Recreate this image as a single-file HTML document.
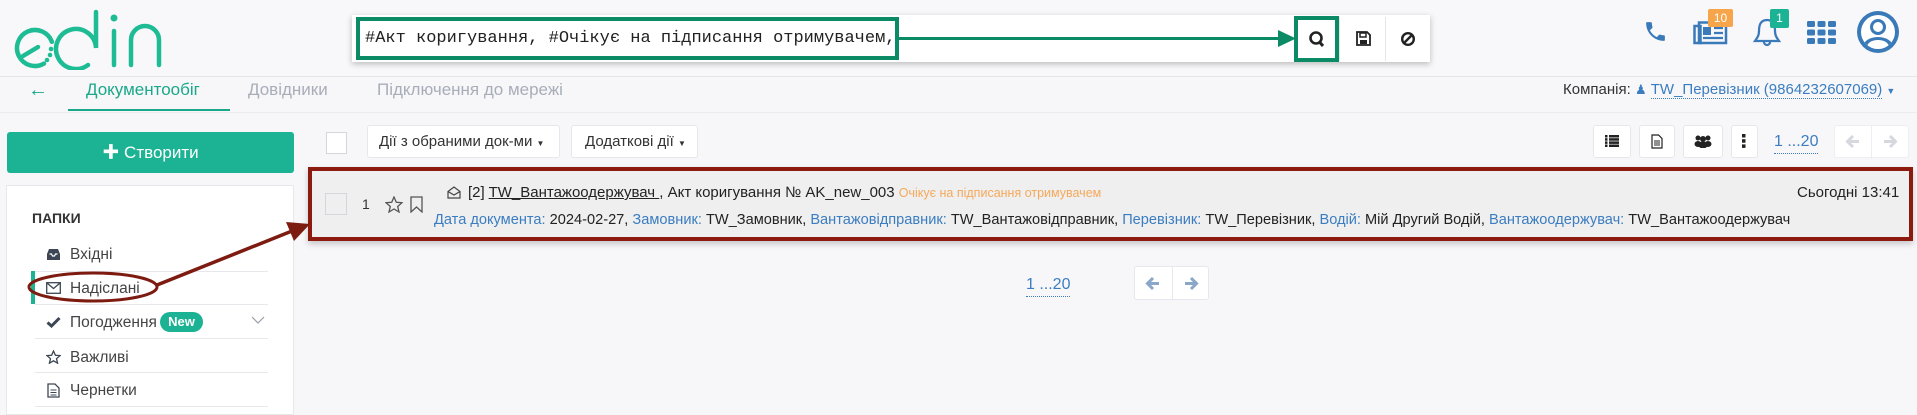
<!DOCTYPE html>
<html><head><meta charset="utf-8"><style>
*{box-sizing:border-box;margin:0;padding:0}
body{width:1917px;height:409px;overflow:hidden;background:#f7f7fa;font-family:"Liberation Sans","Noto Sans CJK SC",sans-serif;color:#333;position:relative}
.a{position:absolute}
.t{position:absolute;white-space:nowrap;line-height:1}
.btn{position:absolute;background:#fff;border:1px solid #e6e7ec;border-radius:3px}
.blue{color:#3b7dc0}
</style></head><body>
<!-- header -->
<div class="a" style="left:0;top:0;width:1917px;height:77px;background:#f8f8fa;border-bottom:1px solid #e4e5ea"></div>
<svg class="a" style="left:14px;top:8px" width="150" height="62" viewBox="0 0 150 62">
 <g fill="none" stroke="#1ebc95" stroke-width="4.5" stroke-linecap="round">
  <path d="M37.9 33.8 A18 18 0 1 0 30 55.6"/>
  <path d="M9 48 L24 39"/>
  <path d="M74 57 A20 20 0 1 1 82 40 L82 4"/>
  <path d="M100 23 L100 57"/>
  <path d="M117 57 L117 32 A14 14 0 0 1 145 32 L145 57"/>
 </g>
 <g fill="#1ebc95"><circle cx="37" cy="41" r="2.3"/><circle cx="36" cy="47" r="2.3"/><circle cx="33" cy="52" r="2.3"/><circle cx="100" cy="10" r="3.5"/></g>
</svg>
<!-- search -->
<div class="a" style="left:352px;top:15px;width:1078px;height:47px;background:#fff;box-shadow:0 2px 6px rgba(0,0,0,.25)"></div>
<div class="a" style="left:356px;top:17px;width:543px;height:43px;border:4px solid #0a8a65"></div>
<div class="t" style="left:365px;top:30px;font-family:'Liberation Mono',monospace;font-size:17px;color:#222">#Акт коригування, #Очікує на підписання отримувачем,</div>
<div class="a" style="left:899px;top:37px;width:385px;height:3px;background:#0a8a65"></div>
<svg class="a" style="left:1278px;top:30px" width="18" height="17"><polygon points="0,0 18,8.5 0,17" fill="#0a8a65"/></svg>
<div class="a" style="left:1294px;top:16px;width:45px;height:46px;border:4px solid #0a8a65"></div>
<svg class="a" style="left:1308px;top:30px" width="17" height="18"><circle cx="8" cy="8" r="5.5" fill="none" stroke="#222" stroke-width="2.6"/><path d="M11.5 12 L15 16" stroke="#222" stroke-width="3"/></svg>
<div class="a" style="left:1339px;top:17px;width:1px;height:44px;background:#e6e6e6"></div>
<svg class="a" style="left:1356px;top:31px" width="15" height="15"><path d="M1 1 H11 L14 4 V14 H1 Z" fill="none" stroke="#222" stroke-width="1.8"/><rect x="4" y="2" width="6" height="4" fill="none" stroke="#222" stroke-width="1.5"/><rect x="4" y="9" width="7" height="4" fill="#222"/></svg>
<div class="a" style="left:1385px;top:17px;width:1px;height:44px;background:#e6e6e6"></div>
<svg class="a" style="left:1400px;top:31px" width="16" height="16"><circle cx="8" cy="8" r="5.8" fill="none" stroke="#222" stroke-width="2.4"/><path d="M4 12 L12 4" stroke="#222" stroke-width="2.4"/></svg>
<!-- right header icons -->
<svg class="a" style="left:1643px;top:19px" width="25" height="25" viewBox="0 0 24 24"><path d="M6.6 10.8c1.4 2.8 3.8 5.1 6.6 6.6l2.2-2.2c.3-.3.7-.4 1-.2 1.1.4 2.300.6 3.6.6.6 0 1 .4 1 1V20c0 .6-.4 1-1 1C10.6 21 3 13.4 3 4c0-.6.4-1 1-1h3.5c.6 0 1 .4 1 1 0 1.3.2 2.5.6 3.6.1.3 0 .7-.2 1z" fill="#3a7ab8"/></svg>
<svg class="a" style="left:1693px;top:21px" width="35" height="24"><rect x="1.5" y="5" width="6" height="17" fill="none" stroke="#3a7ab8" stroke-width="2.5"/><rect x="6" y="1.5" width="27" height="20.5" fill="none" stroke="#3a7ab8" stroke-width="2.5"/><rect x="10" y="6" width="8" height="8" fill="#3a7ab8"/><path d="M21 7H30M21 12H30M10 17H30" stroke="#3a7ab8" stroke-width="2.2"/></svg>
<div class="t" style="left:1708px;top:9px;width:25px;height:18px;background:#f7a54a;color:#fff;font-size:12px;line-height:18px;text-align:center;border-radius:2px">10</div>
<svg class="a" style="left:1752px;top:17px" width="30" height="30"><path d="M15 3 C8 3 7 9 7 14 C7 19 5 21 3 24 H27 C25 21 23 19 23 14 C23 9 22 3 15 3Z" fill="none" stroke="#3a7ab8" stroke-width="2.3"/><path d="M12 25 A3 3 0 0 0 18 25" fill="none" stroke="#3a7ab8" stroke-width="2.3"/></svg>
<div class="t" style="left:1770px;top:9px;width:19px;height:19px;background:#1bb394;color:#fff;font-size:12px;line-height:19px;text-align:center;border-radius:2px">1</div>
<svg class="a" style="left:1807px;top:21px" width="29" height="23"><g fill="#3a7ab8"><rect x="0" y="0" width="8" height="6" rx="1.5"/><rect x="10.5" y="0" width="8" height="6" rx="1.5"/><rect x="21" y="0" width="8" height="6" rx="1.5"/><rect x="0" y="8.5" width="8" height="6" rx="1.5"/><rect x="10.5" y="8.5" width="8" height="6" rx="1.5"/><rect x="21" y="8.5" width="8" height="6" rx="1.5"/><rect x="0" y="17" width="8" height="6" rx="1.5"/><rect x="10.5" y="17" width="8" height="6" rx="1.5"/><rect x="21" y="17" width="8" height="6" rx="1.5"/></g></svg>
<svg class="a" style="left:1857px;top:11px" width="42" height="42"><defs><clipPath id="c"><circle cx="21" cy="21" r="17"/></clipPath></defs><circle cx="21" cy="21" r="21" fill="#3a7ab8"/><circle cx="21" cy="21" r="17" fill="#fff"/><g clip-path="url(#c)" fill="#3a7ab8"><circle cx="21" cy="16" r="8"/><ellipse cx="21" cy="36" rx="15" ry="10"/></g><circle cx="21" cy="16" r="5" fill="#fff"/><ellipse cx="21" cy="36" rx="11" ry="7" fill="#fff" clip-path="url(#c)"/></svg>
<!-- nav -->
<div class="a" style="left:0;top:112px;width:1917px;height:1px;background:#ececf0"></div>
<div class="t" style="left:28px;top:80px;font-size:20px;color:#1aa88a">←</div>
<div class="t" style="left:86px;top:81px;font-size:17px;color:#1aa88a">Документообіг</div>
<div class="a" style="left:68px;top:109px;width:162px;height:2px;background:#1aa88a"></div>
<div class="t" style="left:248px;top:81px;font-size:17px;color:#a8adb8">Довідники</div>
<div class="t" style="left:377px;top:81px;font-size:17px;color:#a8adb8">Підключення до мережі</div>
<div class="t" style="left:1563px;top:82px;font-size:15px;color:#333">Компанія: <span class="blue" style="font-size:13px">&#9823;</span> <span class="blue" style="border-bottom:1px dotted #3b7dc0">TW_Перевізник (9864232607069)</span> <span style="font-size:9px;color:#3b7dc0">▼</span></div>
<!-- sidebar -->
<div class="a" style="left:7px;top:132px;width:287px;height:41px;background:#1cb394;border-radius:3px"></div>
<div class="t" style="left:7px;top:144px;width:287px;text-align:center;color:#fff;font-size:17px"><b>✚</b> Створити</div>
<div class="a" style="left:6px;top:185px;width:288px;height:230px;background:#fff;border:1px solid #e7e7ec"></div>
<div class="t" style="left:32px;top:211px;font-size:14px;font-weight:bold;color:#333">ПАПКИ</div>
<div class="a" style="left:35px;top:271px;width:233px;height:1px;background:#e7e7ec"></div>
<div class="a" style="left:35px;top:304px;width:233px;height:1px;background:#e7e7ec"></div>
<div class="a" style="left:35px;top:338px;width:233px;height:1px;background:#e7e7ec"></div>
<div class="a" style="left:35px;top:372px;width:233px;height:1px;background:#e7e7ec"></div>
<div class="a" style="left:35px;top:406px;width:233px;height:1px;background:#e7e7ec"></div>
<div class="a" style="left:31px;top:271px;width:4px;height:33px;background:#1cb394"></div>
<svg class="a" style="left:46px;top:248px" width="15" height="13"><path d="M1 6 L3 1 H12 L14 6 V12 H1Z" fill="#3d4654"/><path d="M3.5 6 H5.5 L6.5 8 H8.5 L9.5 6 H11.5" stroke="#fff" stroke-width="1.2" fill="none"/></svg>
<div class="t" style="left:70px;top:247px;font-size:15.5px;color:#444">Вхідні</div>
<svg class="a" style="left:46px;top:282px" width="15" height="12"><rect x="0.7" y="0.7" width="13.6" height="10.6" fill="none" stroke="#3d4654" stroke-width="1.3"/><path d="M1 1 L7.5 6.5 L14 1" fill="none" stroke="#3d4654" stroke-width="1.3"/></svg>
<div class="t" style="left:70px;top:281px;font-size:15.5px;color:#444">Надіслані</div>
<svg class="a" style="left:46px;top:316px" width="15" height="12"><path d="M1.5 6.5 L5.5 10 L13.5 2" fill="none" stroke="#3d4654" stroke-width="3"/></svg>
<div class="t" style="left:70px;top:315px;font-size:15.5px;color:#444">Погодження</div>
<div class="t" style="left:160px;top:312px;width:43px;height:20px;background:#1cb394;color:#fff;font-size:13px;font-weight:bold;line-height:20px;text-align:center;border-radius:10px">New</div>
<svg class="a" style="left:251px;top:316px" width="14" height="9"><path d="M1 1 L7 7 L13 1" fill="none" stroke="#9aa0aa" stroke-width="1.2"/></svg>
<svg class="a" style="left:46px;top:350px" width="15" height="14"><polygon points="7.5,1 9.4,5.3 14,5.6 10.5,8.7 11.6,13.2 7.5,10.8 3.4,13.2 4.5,8.7 1,5.6 5.6,5.3" fill="none" stroke="#3d4654" stroke-width="1.3"/></svg>
<div class="t" style="left:70px;top:350px;font-size:15.5px;color:#444">Важливі</div>
<svg class="a" style="left:47px;top:383px" width="13" height="15"><path d="M1 1 H8 L12 5 V14 H1Z" fill="none" stroke="#3d4654" stroke-width="1.3"/><path d="M3.5 7H9.5M3.5 9.5H9.5M3.5 12H9.5" stroke="#3d4654" stroke-width="1"/></svg>
<div class="t" style="left:70px;top:383px;font-size:15.5px;color:#444">Чернетки</div>
<!-- toolbar -->
<div class="a" style="left:326px;top:132px;width:21px;height:22px;background:#fff;border:1px solid #d5d6db"></div>
<div class="btn" style="left:367px;top:125px;width:193px;height:33px"></div>
<div class="t" style="left:379px;top:134px;font-size:15px">Дії з обраними док-ми <span style="font-size:8px">▼</span></div>
<div class="btn" style="left:571px;top:125px;width:127px;height:33px"></div>
<div class="t" style="left:585px;top:134px;font-size:15px">Додаткові дії <span style="font-size:8px">▼</span></div>
<div class="btn" style="left:1593px;top:125px;width:38px;height:33px"></div>
<svg class="a" style="left:1605px;top:135px" width="14" height="12"><g fill="#222"><rect x="0" y="0" width="2.5" height="2.5"/><rect x="4" y="0" width="10" height="2.5"/><rect x="0" y="3.2" width="2.5" height="2.5"/><rect x="4" y="3.2" width="10" height="2.5"/><rect x="0" y="6.4" width="2.5" height="2.5"/><rect x="4" y="6.4" width="10" height="2.5"/><rect x="0" y="9.5" width="2.5" height="2.5"/><rect x="4" y="9.5" width="10" height="2.5"/></g></svg>
<div class="btn" style="left:1639px;top:125px;width:36px;height:33px"></div>
<svg class="a" style="left:1651px;top:134px" width="12" height="15"><path d="M1 1 H7.5 L11 4.5 V14 H1Z" fill="none" stroke="#222" stroke-width="1.2"/><path d="M3 7H9M3 9H9M3 11H9" stroke="#222" stroke-width="1"/></svg>
<div class="btn" style="left:1683px;top:125px;width:40px;height:33px"></div>
<svg class="a" style="left:1694px;top:134px" width="18" height="14"><g fill="#222"><circle cx="4" cy="4" r="2.5"/><circle cx="14" cy="4" r="2.5"/><circle cx="9" cy="5" r="3"/><ellipse cx="4" cy="10" rx="3.5" ry="3"/><ellipse cx="14" cy="10" rx="3.5" ry="3"/><ellipse cx="9" cy="11" rx="4.5" ry="3.5"/></g></svg>
<div class="btn" style="left:1731px;top:125px;width:27px;height:33px"></div>
<svg class="a" style="left:1742px;top:134px" width="4" height="14"><g fill="#222"><rect width="3.5" height="3.5"/><rect y="5.2" width="3.5" height="3.5"/><rect y="10.4" width="3.5" height="3.5"/></g></svg>
<div class="t" style="left:1774px;top:134px;font-size:16px;color:#3b7dc0;border-bottom:1px dotted #3b7dc0;padding-bottom:3px">1 ...20</div>
<div class="btn" style="left:1834px;top:125px;width:75px;height:33px;border-color:#eceef2"></div>
<div class="a" style="left:1871px;top:126px;width:1px;height:31px;background:#eceef2"></div>
<svg class="a" style="left:1845px;top:134px" width="16" height="15"><path d="M14 7.5H3M8 2L2.5 7.5 8 13" fill="none" stroke="#d5d8de" stroke-width="3"/></svg>
<svg class="a" style="left:1882px;top:134px" width="16" height="15"><path d="M2 7.5H13M8 2l5.5 5.5L8 13" fill="none" stroke="#d5d8de" stroke-width="3"/></svg>
<!-- row -->
<div class="a" style="left:308px;top:167px;width:1605px;height:74px;background:#efefef;border:4px solid #8c1a0e;box-shadow:0 3px 6px rgba(0,0,0,.2)"></div>
<div class="a" style="left:325px;top:193px;width:22px;height:22px;border:1px solid #d5d6db;background:#efefef"></div>
<div class="t" style="left:362px;top:197px;font-size:14px">1</div>
<svg class="a" style="left:385px;top:196px" width="18" height="17"><polygon points="9,1 11.3,6.3 17,6.7 12.7,10.5 14,16 9,13 4,16 5.3,10.5 1,6.7 6.7,6.3" fill="none" stroke="#555" stroke-width="1.3"/></svg>
<svg class="a" style="left:410px;top:196px" width="13" height="17"><path d="M1 1 H12 V16 L6.5 11 L1 16Z" fill="none" stroke="#555" stroke-width="1.3"/></svg>
<svg class="a" style="left:447px;top:186px" width="14" height="13"><path d="M1 5.5 L7 1 L13 5.5 V12 H1Z M1 5.5 L7 9 L13 5.5" fill="none" stroke="#444" stroke-width="1.2"/></svg>
<div class="t" style="left:468px;top:185px;font-size:15px;color:#222">[2] <span style="text-decoration:underline">TW_Вантажоодержувач </span>, Акт коригування № AK_new_003 <span style="font-size:12.5px;color:#f6a85a">Очікує на підписання отримувачем</span></div>
<div class="t" style="left:1797px;top:185px;font-size:15px;color:#222">Сьогодні 13:41</div>
<div class="t" style="left:434px;top:213px;font-size:14.6px;color:#222"><span class="blue">Дата документа:</span> 2024-02-27, <span class="blue">Замовник:</span> TW_Замовник, <span class="blue">Вантажовідправник:</span> TW_Вантажовідправник, <span class="blue">Перевізник:</span> TW_Перевізник, <span class="blue">Водій:</span> Мій Другий Водій, <span class="blue">Вантажоодержувач:</span> TW_Вантажоодержувач</div>
<!-- bottom pager -->
<div class="t" style="left:1026px;top:277px;font-size:16px;color:#3b7dc0;border-bottom:1px dotted #3b7dc0;padding-bottom:3px">1 ...20</div>
<div class="btn" style="left:1134px;top:266px;width:75px;height:34px;border-color:#e6e8ee"></div>
<div class="a" style="left:1172px;top:267px;width:1px;height:32px;background:#e6e8ee"></div>
<svg class="a" style="left:1145px;top:276px" width="16" height="15"><path d="M14 7.5H3M8 2L2.5 7.5 8 13" fill="none" stroke="#8aa6c8" stroke-width="3"/></svg>
<svg class="a" style="left:1183px;top:276px" width="16" height="15"><path d="M2 7.5H13M8 2l5.5 5.5L8 13" fill="none" stroke="#8aa6c8" stroke-width="3"/></svg>
<!-- annotation -->
<svg class="a" style="left:0;top:0" width="1917" height="409">
 <ellipse cx="93" cy="287" rx="64" ry="14" fill="none" stroke="#7d1b10" stroke-width="3"/>
 <line x1="157" y1="285" x2="292" y2="231" stroke="#7d1b10" stroke-width="3.5"/>
 <polygon points="310,224 286,222 294,241" fill="#7d1b10"/>
</svg>
</body></html>
